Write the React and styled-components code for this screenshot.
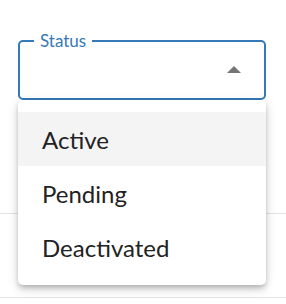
import React from 'react'
import styled, { createGlobalStyle } from 'styled-components'

const GlobalStyle = createGlobalStyle`
  html, body {
    margin: 0;
    padding: 0;
    background: #fff;
    font-family: Lato, "Open Sans", sans-serif;
  }
`

const Page = styled.div`
  position: relative;
  width: 286px;
  height: 304px;
  overflow: hidden;
  background: #fff;
`

const FilterBar = styled.div`
  padding: 31px 20px 0 18px;
`

const Field = styled.div`
  position: relative;
  width: 248px;
`

const Outline = styled.fieldset`
  box-sizing: border-box;
  height: 69px;
  margin: 0;
  padding: 0 12px;
  border: 2px solid #3579b6;
  border-radius: 5px;
  display: flex;
  align-items: center;
  justify-content: flex-end;
`

const Legend = styled.legend`
  margin-left: 2px;
  padding: 0 6px;
  font-size: 17px;
  line-height: 19px;
  color: #3579b6;
`

const Arrow = styled.svg`
  display: block;
  margin: 0 11px 10px 0;
`

const Rows = styled.div`
  margin-top: 30px;
`

const Row = styled.div`
  height: 83px;
  border-bottom: 1px solid #e3e3e3;
`

const Menu = styled.ul`
  position: absolute;
  left: 18px;
  top: 100px;
  width: 248px;
  box-sizing: border-box;
  margin: 0;
  padding: 12px 0 11px;
  list-style: none;
  background: #fff;
  border-radius: 5px;
  box-shadow: 0 3px 5px -1px rgba(0, 0, 0, 0.2), 0 5px 8px 0 rgba(0, 0, 0, 0.12), 0 1px 14px 0 rgba(0, 0, 0, 0.08);
`

const Option = styled.li`
  height: 54px;
  display: flex;
  align-items: center;
  padding: 0 24px;
  font-size: 24px;
  color: #222;
  background: ${({ selected }) => (selected ? '#f4f4f4' : 'transparent')};
`

const options = ['Active', 'Pending', 'Deactivated']

export default function App () {
  return (
    <Page>
      <GlobalStyle />
      <FilterBar>
        <Field>
          <Outline>
            <Legend>Status</Legend>
            <Arrow width='14' height='7' viewBox='0 0 14 7'>
              <path d='M0 7 L7 0 L14 7 Z' fill='#757575' />
            </Arrow>
          </Outline>
        </Field>
      </FilterBar>
      <Rows>
        <Row />
        <Row />
      </Rows>
      <Menu>
        {options.map((o, i) => (
          <Option key={o} selected={i === 0}>{o}</Option>
        ))}
      </Menu>
    </Page>
  )
}
